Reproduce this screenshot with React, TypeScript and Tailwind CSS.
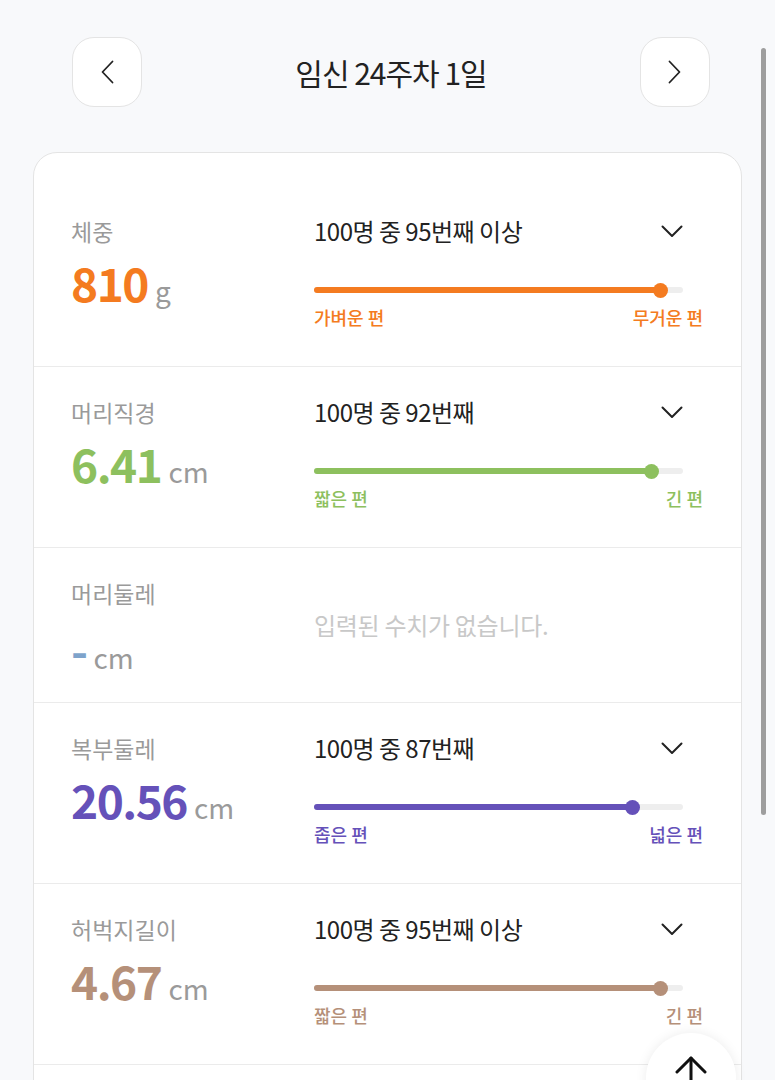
import React from 'react';

type Metric = {
    label: string;
    value: string;
    unit: string;
    color: string;
    rank?: string;
    pct?: number;
    low?: string;
    high?: string;
};

const metrics: Metric[] = [
    { label: '체중', value: '810', unit: 'g', color: '#f47b20', rank: '100명 중 95번째 이상', pct: 94, low: '가벼운 편', high: '무거운 편' },
    { label: '머리직경', value: '6.41', unit: 'cm', color: '#8dc05e', rank: '100명 중 92번째', pct: 91.4, low: '짧은 편', high: '긴 편' },
    { label: '머리둘레', value: '-', unit: 'cm', color: '#7ea3cb' },
    { label: '복부둘레', value: '20.56', unit: 'cm', color: '#6551b9', rank: '100명 중 87번째', pct: 86.2, low: '좁은 편', high: '넓은 편' },
    { label: '허벅지길이', value: '4.67', unit: 'cm', color: '#b59079', rank: '100명 중 95번째 이상', pct: 94, low: '짧은 편', high: '긴 편' },
];

function ChevronDown() {
    return (
        <svg width="22" height="13" viewBox="0 0 22 13" fill="none" stroke="#222" strokeWidth="2" strokeLinecap="round" strokeLinejoin="round">
            <polyline points="1.5,1.5 11,11 20.5,1.5" />
        </svg>
    );
}

function NavButton({ dir }: { dir: 'left' | 'right' }) {
    return (
        <button className="w-[70px] h-[70px] rounded-[22px] bg-white border border-[#e4e4e4] flex items-center justify-center">
            <svg width="13" height="24" viewBox="0 0 13 24" fill="none" stroke="#222" strokeWidth="1.8" strokeLinecap="round" strokeLinejoin="round">
                {dir === 'left' ? <polyline points="11.5,1.5 1.5,12 11.5,22.5" /> : <polyline points="1.5,1.5 11.5,12 1.5,22.5" />}
            </svg>
        </button>
    );
}

function MetricRow({ m, first }: { m: Metric; first?: boolean }) {
    const empty = !m.rank;
    return (
        <div className={`flex border-b border-[#ebebeb] ${first ? 'pt-[62px]' : 'pt-[29px]'} ${empty ? 'h-[155px]' : first ? 'h-[214px]' : 'h-[181px]'}`}>
            <div className="w-[280px] pl-[37px] shrink-0">
                <div className="text-[23px] leading-[32px] text-[#9a9a9a]">{m.label}</div>
                <div className={`flex items-baseline gap-[7px] ${empty ? 'mt-[14px]' : 'mt-[9px]'} leading-[52px]`}>
                    <span className="text-[46px] font-bold tracking-[-1.5px]" style={{ color: m.color }}>{m.value}</span>
                    <span className="text-[28px] text-[#9a9a9a]">{m.unit}</span>
                </div>
            </div>
            <div className="flex-1 pr-[38px]">
                {empty ? (
                    <div className="pt-[32px] text-[24px] leading-[32px] text-[#c8c8c8] tracking-[-0.3px]">입력된 수치가 없습니다.</div>
                ) : (
                    <>
                        <div className="flex items-center justify-between pr-[20px] h-[32px]">
                            <span className="text-[24px] text-[#222] tracking-[-0.5px]">{m.rank}</span>
                            <ChevronDown />
                        </div>
                        <div className="relative mt-[35px] mr-[20px] h-[16px] flex items-center">
                            <div className="w-full h-[6px] rounded-full bg-[#eeeeee]">
                                <div className="h-full rounded-full" style={{ width: `${m.pct}%`, background: m.color }} />
                            </div>
                            <div className="absolute top-[0.5px] w-[15px] h-[15px] rounded-full" style={{ left: `calc(${m.pct}% - 7.5px)`, background: m.color }} />
                        </div>
                        <div className="mt-[7px] flex justify-between text-[18px] leading-[24px] font-medium" style={{ color: m.color }}>
                            <span>{m.low}</span>
                            <span>{m.high}</span>
                        </div>
                    </>
                )}
            </div>
        </div>
    );
}

export default function App() {
    return (
        <div className="min-h-screen bg-[#f8f9fb] overflow-hidden" style={{ fontFamily: '"Noto Sans CJK KR", "Noto Sans", sans-serif' }}>
            <div className="flex items-center justify-between pt-[37px] pl-[72px] pr-[65px]">
                <NavButton dir="left" />
                <h1 className="text-[30px] text-[#222] tracking-[-1px] font-normal">임신 24주차 1일</h1>
                <NavButton dir="right" />
            </div>

            <div className="mt-[45px] mx-[33px] bg-white border border-[#e4e4e4] rounded-t-[24px] min-h-[1000px]">
                {metrics.map((m, i) => (
                    <MetricRow key={m.label} m={m} first={i === 0} />
                ))}
            </div>

            {/* overlay scrollbar */}
            <div className="fixed top-[48px] right-[9px] w-[5px] h-[767px] rounded-full bg-[#9e9e9e]" />

            {/* scroll to top */}
            <button className="fixed right-[39px] bottom-[-43px] w-[90px] h-[90px] rounded-full bg-white shadow-[0_0_12px_rgba(0,0,0,0.08)] flex items-start justify-center pt-[22px]">
                <svg width="32" height="40" viewBox="0 0 32 40" fill="none" stroke="#111" strokeWidth="3" strokeLinecap="round" strokeLinejoin="round">
                    <line x1="16" y1="3" x2="16" y2="40" />
                    <polyline points="2,17 16,3 30,17" />
                </svg>
            </button>
        </div>
    );
}
